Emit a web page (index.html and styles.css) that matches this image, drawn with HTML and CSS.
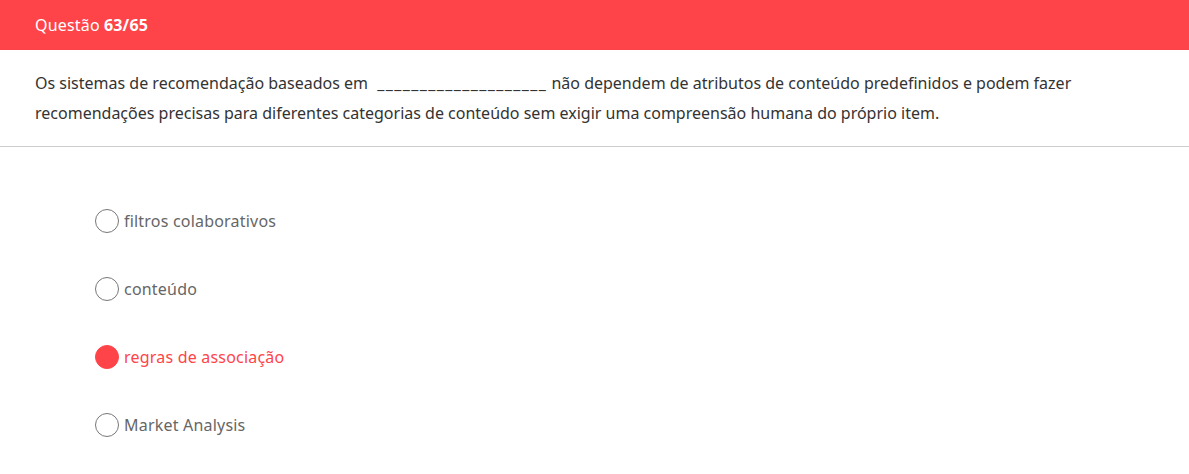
FILE: index.html
```html
<!DOCTYPE html>
<html lang="pt">
<head>
<meta charset="utf-8">
<link rel="stylesheet" href="styles.css">
</head>
<body>
<header class="bar">Questão <b>63/65</b></header>
<section class="question">
<p>Os sistemas de recomendação baseados em <span class="blank">____________________</span> não dependem de atributos de conteúdo predefinidos e podem fazer recomendações precisas para diferentes categorias de conteúdo sem exigir uma compreensão humana do próprio item.</p>
</section>
<ul class="options">
<li class="opt"><span class="radio"></span><span>filtros colaborativos</span></li>
<li class="opt"><span class="radio"></span><span>conteúdo</span></li>
<li class="opt selected"><span class="radio"></span><span>regras de associação</span></li>
<li class="opt"><span class="radio"></span><span>Market Analysis</span></li>
</ul>
</body>
</html>
```
FILE: styles.css
```css
body {
  margin: 0;
  font-family: "Noto Sans", "Open Sans", sans-serif;
  background: #fff;
}
.bar {
  height: 50px;
  background: #ff4449;
  color: #fff;
  font-size: 16px;
  letter-spacing: 0.2px;
  display: flex;
  align-items: center;
  gap: 4px;
  padding-left: 35px;
}
.bar b { font-weight: 700; }
.question {
  padding: 18px 35px 18px 35px;
  border-bottom: 1px solid #cccccc;
}
.question p {
  margin: 0;
  font-size: 16px;
  line-height: 30px;
  color: #333;
  max-width: 1060px;
}
.blank {
  letter-spacing: 1.4px;
  margin-left: 5px;
}
.options {
  list-style: none;
  margin: 0;
  padding: 40px 0 0 95px;
}
.opt {
  height: 68px;
  display: flex;
  align-items: center;
  gap: 5px;
  font-size: 16px;
  letter-spacing: 0.2px;
  color: #666;
}
.radio {
  width: 22px;
  height: 22px;
  border: 1px solid #777;
  border-radius: 50%;
  box-sizing: content-box;
  flex: none;
}
.selected { color: #ff4449; }
.selected .radio {
  background: #ff4449;
  border-color: #ff4449;
}
```
